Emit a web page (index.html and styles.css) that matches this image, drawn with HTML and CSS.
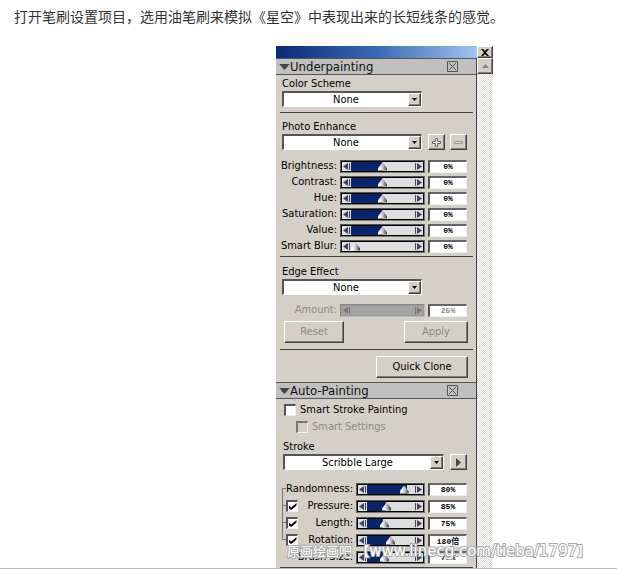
FILE: index.html
```
<!DOCTYPE html>
<html lang="zh-CN">
<head>
    <meta charset="UTF-8">
    <meta name="viewport" content="width=device-width, initial-scale=1.0">
    <title>笔刷设置</title>
    <link rel="stylesheet" href="styles.css">
</head>
<body>
    <svg class="symbols" aria-hidden="true">
        <symbol id="i-down" viewBox="0 0 7 4"><path d="M0 0h7L3.5 4z" fill="currentColor"/></symbol>
        <symbol id="i-left" viewBox="0 0 7 7"><path d="M5 0v7L0 3.5zM6 0h1v7H6z" fill="currentColor"/></symbol>
        <symbol id="i-right" viewBox="0 0 7 7"><path d="M2 0v7l5-3.500zM0 0h1v7H0z" fill="currentColor"/></symbol>
        <symbol id="i-box" viewBox="0 0 11 11"><path d="M.5.5h10v10H.5zM2 2l7 7M9 2L2 9" fill="none" stroke="currentColor"/></symbol>
    </svg>

    <article>
        <p class="intro">打开笔刷设置项目，选用油笔刷来模拟《星空》中表现出来的长短线条的感觉。</p>

        <div class="window">
            <div class="main">
                <div class="titlebar"></div>
                <h2 class="header">
                    <svg class="fold"><use href="#i-down"/></svg><span>Underpainting</span>
                    <button class="collapse" aria-label="Close Underpainting"><svg><use href="#i-box"/></svg></button>
                </h2>

                <section class="section scheme">
                    <label class="title" for="scheme">Color Scheme</label>
                    <div class="combo"><select id="scheme"><option>None</option></select><span class="drop"><svg><use href="#i-down"/></svg></span></div>
                </section>

                <section class="section enhance">
                    <label class="title" for="enhance">Photo Enhance</label>
                    <div class="line">
                        <div class="combo"><select id="enhance"><option>None</option></select><span class="drop"><svg><use href="#i-down"/></svg></span></div>
                        <button class="tool" aria-label="Add"><svg viewBox="0 0 9 9"><path d="M3.500.5h2v3h3v2h-3v3h-2v-3h-3v-2h3z" fill="#eee" stroke="#666"/></svg></button>
                        <button class="tool" aria-label="Remove"><svg viewBox="0 0 9 9"><path d="M.5 3.500h8v2h-8z" fill="#ddd" stroke="#999"/></svg></button>
                    </div>
                    <div class="sliders" data-rows="Brightness:50:0%|Contrast:50:0%|Hue:50:0%|Saturation:50:0%|Value:50:0%|Smart Blur:0:0%"></div>
                </section>

                <section class="section edge">
                    <label class="title" for="edge">Edge Effect</label>
                    <div class="combo"><select id="edge"><option>None</option></select><span class="drop"><svg><use href="#i-down"/></svg></span></div>
                    <div class="sliders disabled" data-rows="Amount:25:25%"></div>
                    <div class="actions">
                        <button class="btn reset" disabled>Reset</button>
                        <button class="btn apply" disabled>Apply</button>
                    </div>
                </section>

                <section class="section clone">
                    <button class="btn wide">Quick Clone</button>
                </section>

                <h2 class="header">
                    <svg class="fold"><use href="#i-down"/></svg><span>Auto-Painting</span>
                    <button class="collapse" aria-label="Close Auto-Painting"><svg><use href="#i-box"/></svg></button>
                </h2>

                <section class="section auto">
                    <label class="check"><input type="checkbox">Smart Stroke Painting</label>
                    <label class="check sub"><input type="checkbox" disabled>Smart Settings</label>
                    <label class="title" for="stroke">Stroke</label>
                    <div class="line">
                        <div class="combo"><select id="stroke"><option>Scribble Large</option></select><span class="drop"><svg><use href="#i-down"/></svg></span></div>
                        <button class="tool" aria-label="Play stroke"><svg viewBox="0 0 9 9"><path d="M2 0v9l5-4.500z" fill="#444"/></svg></button>
                    </div>
                    <div class="sliders linked" data-rows="Randomness:86:80%|Pressure:40:85%:on|Length:34:75%:on|Rotation:50:180倍:on|Brush Size:34:75%"></div>
                </section>
            </div>

            <div class="side">
                <button class="close" aria-label="Close"><svg viewBox="0 0 8 7"><path d="M0 0h2l2 2 2-2h2L5 3.500 8 7H6L4 5 2 7H0l3-3.500z" fill="#000"/></svg></button>
                <button class="scroll-up" aria-label="Scroll up"><svg class="flip"><use href="#i-down"/></svg></button>
                <div class="scroll-track"></div>
            </div>
            <div class="watermark">原画绘画吧 【<span>www.linecg.com/tieba/1797</span>】</div>
        </div>
    </article>

    <script>
        // Build the slider rows, "name:position:value[:on]"
        document.querySelectorAll('.sliders').forEach((group) => {
            const off = group.classList.contains('disabled') ? 'disabled' : '';
            group.innerHTML = group.dataset.rows.split('|').map((row) => {
                const [name, pos, value, on] = row.split(':');
                const id = name.toLowerCase().replace(' ', '-');
                const tick = on ? `<input type="checkbox" checked aria-label="Use ${name}">` : '';
                return `<div class="row">
                    <span class="tick">${tick}</span>
                    <label for="${id}">${name}:</label>
                    <div class="slider">
                        <button aria-label="Decrease ${name}" ${off}><svg><use href="#i-left"/></svg></button>
                        <input type="range" id="${id}" value="${pos}" style="--pos: ${pos}%" ${off}>
                        <button aria-label="Increase ${name}" ${off}><svg><use href="#i-right"/></svg></button>
                    </div>
                    <input class="value" type="text" value="${value}" aria-label="${name} value" ${off}>
                </div>`;
            }).join('');
        });

        document.querySelectorAll('input[type=range]').forEach((range) => {
            range.addEventListener('input', () => range.style.setProperty('--pos', range.value + '%'));
        });
    </script>
</body>
</html>
```
FILE: styles.css
```
:root {
    --face: #d4d0c8;
    --header: #c0c0c0;
    --navy: #0a246a;
    --dark: #404040;
    --shadow: #808080;
    --disabled: #8c8a86;
}

* {
    box-sizing: border-box;
}

body {
    margin: 0;
    background: #fff;
    color: #000;
    font: 11px/14px "DejaVu Sans Condensed", "DejaVu Sans", sans-serif;
}

button,
input,
select {
    margin: 0;
    padding: 0;
    border: 0;
    border-radius: 0;
    color: inherit;
    font: inherit;
}

.symbols {
    display: none;
}

svg {
    display: block;
    flex: none;
}

article {
    border-bottom: 1px solid #bbb;
}

.intro {
    margin: 0;
    padding: 6px 14px 20px;
    color: #333;
    font: 14px/20px "Noto Sans CJK SC", sans-serif;
}

.window {
    position: relative;
    display: flex;
    width: 217px;
    margin: 0 auto 0 276px;
}

.main {
    flex: 1;
    min-width: 0;
    background: var(--face);
    border-right: 1px solid var(--dark);
}

.titlebar {
    height: 12px;
    margin-right: -1px;
    background: linear-gradient(90deg, #0a2a78, #3a68b4 50%, #a0c4f0);
}

.header {
    display: flex;
    align-items: center;
    height: 17px;
    margin: 0;
    padding: 0 18px 0 3px;
    background: var(--header);
    border-top: 1px solid #555;
    border-bottom: 1px solid #555;
    color: #111;
    font-size: 13px;
    font-weight: normal;
}

.fold {
    width: 11px;
    height: 6px;
    color: #444;
}

.collapse {
    margin-left: auto;
    background: none;
    color: #555;
}

.collapse svg {
    width: 11px;
    height: 11px;
}

/* --- Sections --- */
.section {
    margin: 0 3px 0 4px;
    padding: 0 6px 0 2px;
    border-bottom: 1px solid var(--dark);
}

.title {
    display: block;
}

.scheme {
    padding-top: 2px;
    padding-bottom: 5px;
}

.enhance {
    padding-top: 7px;
    padding-bottom: 4px;
}

.edge {
    padding-top: 8px;
    padding-bottom: 6px;
}

.clone {
    display: flex;
    justify-content: flex-end;
    padding-top: 6px;
    padding-bottom: 4px;
    padding-right: 5px;
    border: 0;
}

.auto {
    padding-top: 2px;
    padding-bottom: 4px;
}

.line {
    display: flex;
    justify-content: space-between;
}

/* --- Combo boxes and buttons --- */
.combo {
    display: flex;
    width: 140px;
    height: 16px;
    background: #fff;
    border: 1px solid #fff;
    border-top: 2px solid #555;
    border-left: 2px solid #555;
}

.combo select {
    flex: 1;
    min-width: 0;
    appearance: none;
    background: none;
    text-align-last: center;
    line-height: 13px;
}

.drop,
.tool,
.btn,
.close,
.scroll-up {
    display: flex;
    align-items: center;
    justify-content: center;
    background: var(--face);
    border: 1px solid #fff;
    border-right-color: var(--dark);
    border-bottom-color: var(--dark);
    box-shadow: inset -1px -1px var(--shadow);
}

.drop {
    width: 13px;
}

.drop svg {
    width: 5px;
    height: 3px;
}

.tool {
    width: 17px;
    height: 16px;
}

.tool svg {
    width: 9px;
    height: 9px;
}

.btn {
    width: 60px;
    height: 22px;
}

.btn.apply {
    width: 64px;
}

.btn.wide {
    width: 92px;
}

.btn:disabled {
    color: var(--disabled);
}

.actions {
    display: flex;
    justify-content: space-between;
    margin: 5px -1px 0 2px;
}

/* --- Sliders --- */
.sliders {
    display: grid;
    gap: 3px;
    margin-top: 9px;
}

.edge .sliders {
    margin-top: 8px;
}

.row {
    display: grid;
    grid-template-columns: 0 minmax(0, 1fr) 85px 39px;
    column-gap: 3px;
    align-items: center;
    height: 13px;
}

.row label {
    justify-self: end;
    white-space: nowrap;
}

.row .slider {
    display: flex;
    align-items: center;
    height: 13px;
    padding: 1px;
    background: #000;
    border: 1px solid #777;
    border-top-color: #555;
    border-left-color: #555;
}

.slider button {
    display: flex;
    align-items: center;
    justify-content: center;
    width: 9px;
    height: 9px;
    background: #dcdce0;
    color: #445;
}

.slider button svg {
    width: 7px;
    height: 7px;
}

.slider input {
    flex: 1;
    min-width: 0;
    height: 9px;
    appearance: none;
    background: linear-gradient(var(--navy) 0 0) 0 0 / var(--pos) 100% no-repeat #dedede;
}

.slider input::-webkit-slider-thumb {
    appearance: none;
    width: 9px;
    height: 9px;
    background: linear-gradient(90deg, #f4f4f8 30%, #b0b4c0 60%, #333);
    clip-path: polygon(50% 10%, 100% 75%, 100% 100%, 0 100%, 0 75%);
}

.value {
    width: 100%;
    height: 13px;
    background: #fff;
    border: 1px solid #eee;
    border-top: 2px solid #666;
    border-left: 2px solid #555;
    text-align: center;
    font: bold 8px/10px "Liberation Mono", "Noto Sans CJK SC", monospace;
}

.disabled label,
.disabled .value {
    color: var(--disabled);
}

.disabled .slider {
    background: #999;
    border-color: #888 #bbb #bbb #888;
}

.disabled .slider button,
.disabled .slider input {
    background: #a4a4a4;
    color: #777;
}

.disabled .slider input::-webkit-slider-thumb {
    visibility: hidden;
}

/* --- Auto-Painting --- */
.check {
    display: flex;
    align-items: center;
    gap: 4px;
    height: 17px;
    padding-left: 2px;
}

.check.sub {
    padding-left: 14px;
    color: var(--disabled);
}

input[type="checkbox"] {
    display: grid;
    place-items: center;
    width: 12px;
    height: 12px;
    appearance: none;
    background: #fff;
    border: 1px solid #eee;
    border-top: 2px solid #555;
    border-left: 2px solid #555;
}

input[type="checkbox"]:disabled {
    background: var(--face);
    border-top-color: #777;
    border-left-color: #777;
}

input[type="checkbox"]:checked::before {
    content: "";
    width: 8px;
    height: 7px;
    background: #000;
    clip-path: polygon(0 35%, 35% 65%, 100% 0, 100% 35%, 35% 100%, 0 70%);
}

.auto .title {
    margin-top: 5px;
    padding: 0 1px;
}

.auto .combo {
    width: 161px;
    margin-left: 1px;
}

.linked {
    gap: 4px;
    margin-top: 12px;
    background:
        linear-gradient(#777 0 0) 0 6px / 4px 1px no-repeat,
        linear-gradient(#777 0 0) 0 23px / 4px 1px no-repeat,
        linear-gradient(#777 0 0) 0 40px / 4px 1px no-repeat,
        linear-gradient(#777 0 0) 0 57px / 4px 1px no-repeat,
        linear-gradient(#777 0 0) 0 6px / 1px 52px no-repeat;
}

.linked .row {
    grid-template-columns: 16px minmax(0, 1fr) 69px 39px;
}

.linked .tick {
    padding-left: 4px;
}

.linked .row:first-child label {
    margin-left: -16px;
}

/* --- Window edge --- */
.side {
    display: flex;
    flex: none;
    flex-direction: column;
    width: 16px;
}

.close {
    height: 12px;
}

.close svg {
    width: 8px;
    height: 7px;
}

.scroll-up {
    height: 16px;
}

.scroll-up svg {
    width: 7px;
    height: 4px;
    color: #888;
}

.flip {
    transform: rotate(180deg);
}

.scroll-track {
    flex: 1;
    background: repeating-conic-gradient(#fff 0 25%, #dedad6 0 50%) 0 0 / 2px 2px;
}

.watermark {
    position: absolute;
    left: 11px;
    bottom: 6px;
    color: #fff;
    white-space: nowrap;
    font: 13px/20px "DejaVu Sans", "Noto Sans CJK SC", sans-serif;
    -webkit-text-stroke: 2px #aaa;
    paint-order: stroke fill;
    pointer-events: none;
}

.watermark span {
    font-size: 15px;
}
```
